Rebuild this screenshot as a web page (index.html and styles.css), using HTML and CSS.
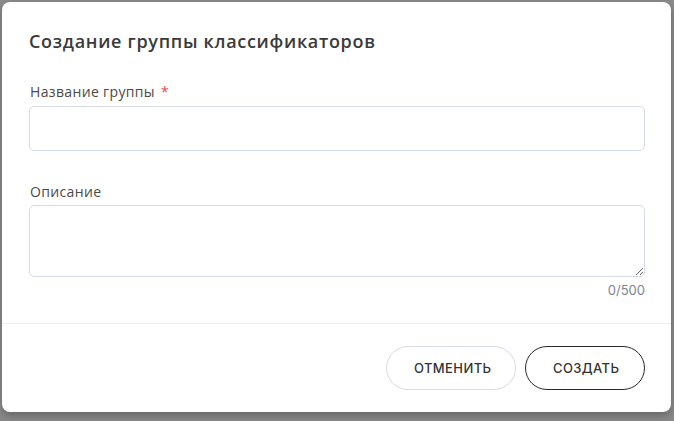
FILE: index.html
```html
<!DOCTYPE html>
<html lang="ru">
<head>
<meta charset="utf-8">
<title>Создание группы классификаторов</title>
<link rel="stylesheet" href="styles.css">
</head>
<body>
<div class="modal">
  <div class="modal-body">
    <h2 class="modal-title">Создание группы классификаторов</h2>
    <div class="field">
      <label class="field-label" for="name">Название группы <span class="req">*</span></label>
      <input class="input" id="name" type="text">
    </div>
    <div class="field field-desc">
      <label class="field-label label-desc" for="desc">Описание</label>
      <textarea class="textarea" id="desc"></textarea>
      <div class="counter">0/500</div>
    </div>
  </div>
  <div class="modal-footer">
    <button class="btn btn-cancel" type="button">Отменить</button>
    <button class="btn btn-create" type="button">Создать</button>
  </div>
</div>
</body>
</html>
```
FILE: styles.css
```css
* { box-sizing: border-box; }
html, body { height: 100%; }
body {
  margin: 0;
  padding: 2px 3px 9px 2px;
  background: #8a8a8a;
  font-family: Inter, "Noto Sans", sans-serif;
}
.modal {
  background: #fff;
  border-radius: 8px;
  box-shadow: 0 4px 8px rgba(0,0,0,0.25);
  display: flex;
  flex-direction: column;
  height: 100%;
}
.modal-body {
  padding: 27px 26px 24px 27px;
  flex: 1;
}
.modal-title {
  margin: 0 0 29px;
  font-family: "Open Sans", sans-serif;
  font-size: 18px;
  line-height: 24px;
  font-weight: 600;
  letter-spacing: 0.7px;
  color: #3a3a3a;
}
.field-label {
  display: block;
  font-family: "Open Sans", sans-serif;
  font-size: 14px;
  line-height: 20px;
  letter-spacing: 0.35px;
  color: #4a4a4a;
  margin-bottom: 4px;
  padding-left: 1px;
}
.label-desc { margin-bottom: 3px; }
.req { color: #e5484d; margin-left: 2px; }
.field-desc { margin-top: 31px; }
.input, .textarea {
  display: block;
  width: 100%;
  border: 1px solid #d7dbe6;
  border-radius: 5px;
  background: #fff;
  font-family: inherit;
  font-size: 14px;
  margin: 0;
}
.input { height: 45px; }
.textarea { height: 72px; resize: vertical; }
.counter {
  margin-top: 5px;
  text-align: right;
  font-size: 13px;
  line-height: 16px;
  color: #7b8394;
}
.modal-footer {
  border-top: 1px solid #eeeff2;
  padding: 22px 26px 22px 27px;
  display: flex;
  justify-content: flex-end;
  gap: 9px;
}
.btn {
  height: 44px;
  padding: 0 27px;
  border-radius: 22px;
  background: #fff;
  font-family: inherit;
  font-size: 13px;
  font-weight: 500;
  letter-spacing: 0.4px;
  text-transform: uppercase;
  color: #333;
  cursor: pointer;
}
.btn-cancel { border: 1px solid #d7dbe6; width: 130px; }
.btn-create { border: 1px solid #2a2a2a; width: 120px; }
```
